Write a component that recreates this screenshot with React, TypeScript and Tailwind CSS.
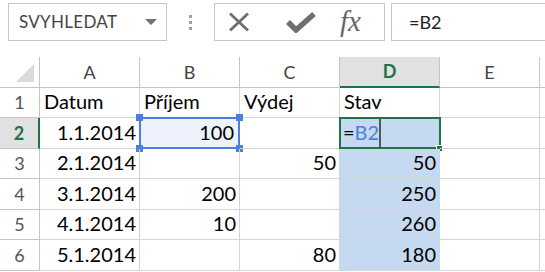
import React from 'react';

const font = { fontFamily: 'Lato, "Open Sans", sans-serif' };

const cols = ['A', 'B', 'C', 'D', 'E', ''];
const rowHeights = ['h-[30px]', 'h-[31px]', 'h-[30px]', 'h-[31px]', 'h-[30px]', 'h-[31px]'];

type Row = { a: string; b: string; c: string; d: string };
const rows: Row[] = [
  { a: 'Datum', b: 'Příjem', c: 'Výdej', d: 'Stav' },
  { a: '1.1.2014', b: '100', c: '', d: '' },
  { a: '2.1.2014', b: '', c: '50', d: '50' },
  { a: '3.1.2014', b: '200', c: '', d: '250' },
  { a: '4.1.2014', b: '10', c: '', d: '260' },
  { a: '5.1.2014', b: '', c: '80', d: '180' },
];

const Handle = ({ className }: { className: string }) => (
  <div className={`absolute w-[7px] h-[7px] bg-[#4a7fe0] ${className}`} />
);

const TopBar = () => (
  <div className="h-[57px] flex items-start pt-[3px] bg-white">
    <div className="ml-[8px] w-[159px] h-[38px] border border-[#c6c6c6] flex items-center justify-between pl-[10px] pr-[9px]">
      <span className="text-[17px] text-[#444] tracking-[0.3px]" style={font}>SVYHLEDAT</span>
      <svg width="12" height="8" viewBox="0 0 12 8">
        <path d="M0 1 L12 1 L6 7 Z" fill="#707070" />
      </svg>
    </div>
    <div className="w-[47px] h-[38px] flex items-center justify-center">
      <div className="flex flex-col gap-[3px]">
        <div className="w-[3px] h-[3px] bg-[#a0a0a0]" />
        <div className="w-[3px] h-[3px] bg-[#a0a0a0]" />
        <div className="w-[3px] h-[3px] bg-[#a0a0a0]" />
      </div>
    </div>
    <div className="w-[171px] h-[38px] border border-[#c6c6c6] flex items-center">
      <svg className="ml-[13px]" width="22" height="20" viewBox="0 0 22 20">
        <path d="M2 1.5 L20 18.5 M20 1.5 L2 18.5" stroke="#6f6f6f" strokeWidth="2.8" />
      </svg>
      <svg className="ml-[36px]" width="30" height="22" viewBox="0 0 30 22">
        <path d="M2 11 L10 19 L28 3" stroke="#6f6f6f" strokeWidth="5.5" fill="none" strokeLinejoin="miter" />
      </svg>
      <span
        className="ml-[24px] text-[29px] italic text-[#666] leading-none -mt-[2px]"
        style={{ fontFamily: '"Liberation Serif", "DejaVu Serif", serif' }}
      >
        fx
      </span>
    </div>
    <div className="ml-[6px] flex-1 h-[38px] border border-r-0 border-[#c6c6c6] flex items-center pl-[17px]">
      <span className="text-[18px] text-[#222]" style={font}>=B2</span>
    </div>
  </div>
);

const HeaderRow = () => (
  <div className="flex h-[31px]">
    <div className="w-[40px] shrink-0 border-r border-b border-[#c4c4c4] relative">
      <svg className="absolute right-[5px] bottom-[5px]" width="18" height="18" viewBox="0 0 18 18">
        <path d="M18 0 L18 18 L0 18 Z" fill="#dadada" />
      </svg>
    </div>
    {cols.map((c, i) => {
      const sel = c === 'D';
      return (
        <div
          key={i}
          className={`w-[100px] shrink-0 flex items-center justify-center text-[18px] border-r ${
            sel
              ? 'bg-[#e1e1e1] text-[#217346] font-bold border-b-2 border-b-[#217346] border-r-[#c4c4c4]'
              : 'text-[#444] border-b border-[#c4c4c4]'
          }`}
          style={font}
        >
          {c}
        </div>
      );
    })}
  </div>
);

const Cell = ({
  text,
  align,
  className = '',
  children,
}: {
  text?: string;
  align: 'left' | 'right';
  className?: string;
  children?: React.ReactNode;
}) => (
  <div
    className={`w-[100px] shrink-0 relative border-r border-b border-[#d4d4d4] flex items-end pb-[1px] text-[20px] text-black ${
      align === 'right' ? 'justify-end pr-[3px]' : 'justify-start pl-[4px]'
    } ${className}`}
    style={font}
  >
    {text}
    {children}
  </div>
);

export default function App() {
  return (
    <div className="w-[545px] h-[272px] overflow-hidden bg-white">
      <TopBar />
      <HeaderRow />
      {rows.map((r, i) => {
        const n = i + 1;
        const head = i === 0;
        const active = n === 2;
        const inD = n >= 2;
        return (
          <div key={n} className={`flex ${rowHeights[i]}`}>
            <div
              className={`w-[40px] shrink-0 flex items-center justify-center text-[18px] border-b ${
                active
                  ? 'bg-[#e1e1e1] text-[#217346] font-bold border-r-2 border-r-[#217346] border-b-[#c4c4c4]'
                  : 'text-[#555] border-r border-[#c4c4c4]'
              }`}
              style={font}
            >
              {n}
            </div>
            <Cell text={r.a} align={head ? 'left' : 'right'} />
            <Cell
              text={active ? '' : r.b}
              align={head ? 'left' : 'right'}
              className={active ? 'bg-[#eef2fc]' : ''}
            >
              {active && (
                <>
                  <span className="mr-[2px]">{r.b}</span>
                  <div className="absolute -left-[1px] -top-[1px] w-[101px] h-[32px] border-2 border-[#4a7fe0]" />
                  <Handle className="-left-[4px] -top-[4px]" />
                  <Handle className="-right-[4px] -top-[4px]" />
                  <Handle className="-left-[4px] -bottom-[4px]" />
                  <Handle className="-right-[4px] -bottom-[4px]" />
                </>
              )}
            </Cell>
            <Cell text={r.c} align={head ? 'left' : 'right'} />
            <Cell
              text={active ? '' : r.d}
              align={head ? 'left' : 'right'}
              className={inD ? 'bg-[#c5d9f1] border-r-[#c5d9f1]' : ''}
            >
              {active && (
                <>
                  <div className="absolute left-[3px] bottom-[1px] flex items-end">
                    <span className="text-black">=</span>
                    <span className="text-[#4a7fe0]">B2</span>
                  </div>
                  <div className="absolute left-[39px] top-[1px] bottom-[1px] w-[2px] bg-[#555]" />
                  <div className="absolute -left-[1px] -top-[1px] w-[102px] h-[32px] border-2 border-[#217346]" />
                  <div className="absolute -right-[4px] -bottom-[4px] w-[7px] h-[7px] bg-[#217346] border border-white" />
                </>
              )}
            </Cell>
            <Cell text="" align="left" />
            <Cell text="" align="left" />
          </div>
        );
      })}
    </div>
  );
}
